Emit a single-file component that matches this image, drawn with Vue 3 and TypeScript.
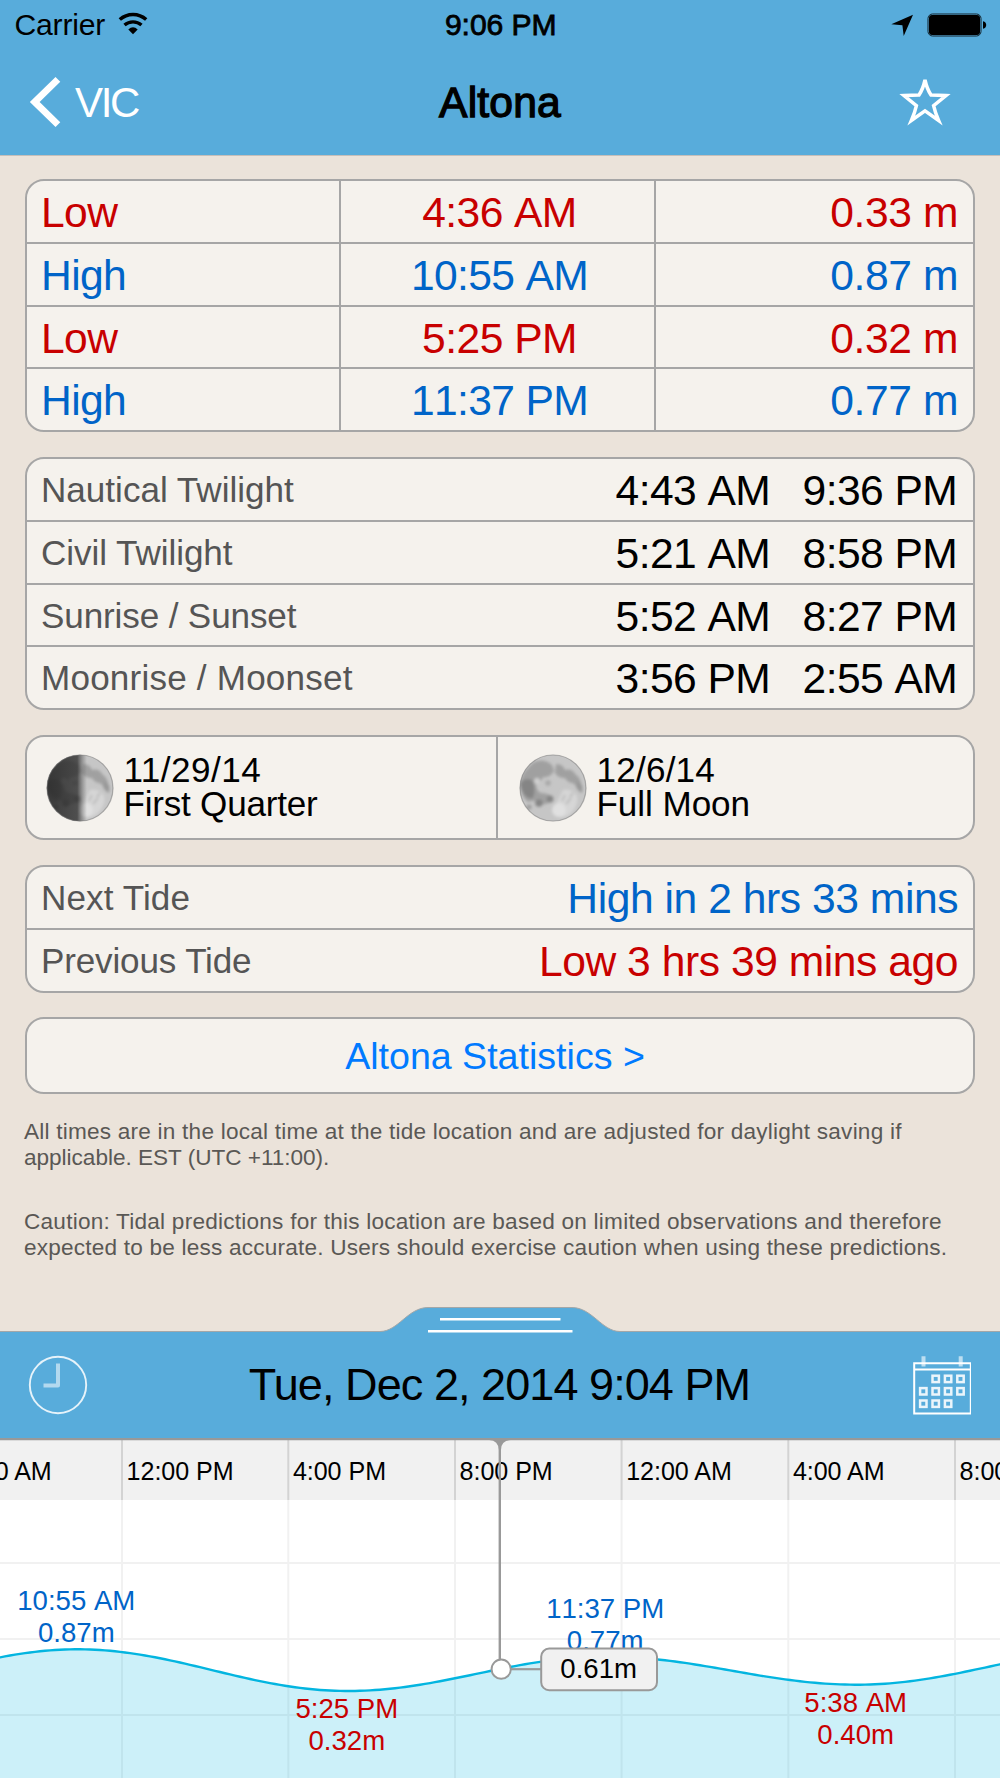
<script setup lang="ts">
interface Tide { kind: 'Low' | 'High'; time: string; height: string; spacing: number }
interface SunRow { label: string; start: string; end: string; labelSpacing: number }
interface Extreme { x: number; y: number }
interface ChartLabel { x: number; y: number; time: string; height: string; kind: 'low' | 'high' }

const tides: Tide[] = [
  { kind: 'Low', time: '4:36 AM', height: '0.33 m', spacing: -0.6 },
  { kind: 'High', time: '10:55 AM', height: '0.87 m', spacing: -0.65 },
  { kind: 'Low', time: '5:25 PM', height: '0.32 m', spacing: -0.5 },
  { kind: 'High', time: '11:37 PM', height: '0.77 m', spacing: -0.65 },
]

const sunRows: SunRow[] = [
  { label: 'Nautical Twilight', start: '4:43 AM', end: '9:36 PM', labelSpacing: 0 },
  { label: 'Civil Twilight', start: '5:21 AM', end: '8:58 PM', labelSpacing: -0.06 },
  { label: 'Sunrise / Sunset', start: '5:52 AM', end: '8:27 PM', labelSpacing: -0.13 },
  { label: 'Moonrise / Moonset', start: '3:56 PM', end: '2:55 AM', labelSpacing: 0.2 },
]

const phases = [
  { date: '11/29/14', name: 'First Quarter', dark: true, spacing: 0.47, nameSpacing: -0.22 },
  { date: '12/6/14', name: 'Full Moon', dark: false, spacing: 0.22, nameSpacing: -0.06 },
]

const notes = [
  [
    { text: 'All times are in the local time at the tide location and are adjusted for daylight saving if', spacing: 0.216 },
    { text: 'applicable. EST (UTC +11:00).', spacing: -0.03 },
  ],
  [
    { text: 'Caution: Tidal predictions for this location are based on limited observations and therefore', spacing: 0.228 },
    { text: 'expected to be less accurate. Users should exercise caution when using these predictions.', spacing: 0.2 },
  ],
]

// Chart space: y is measured from the bottom edge of the date bar.
const columns = [
  { x: -44.6, label: '8:00 AM' },
  { x: 122, label: '12:00 PM' },
  { x: 288.3, label: '4:00 PM' },
  { x: 455, label: '8:00 PM' },
  { x: 621.6, label: '12:00 AM' },
  { x: 788.3, label: '4:00 AM' },
  { x: 955, label: '8:00 AM' },
]
const gridRows = [125, 201, 277]

const extremes: Extreme[] = [
  { x: -186, y: 252.3 },
  { x: 77, y: 211.3 },
  { x: 347.5, y: 253 },
  { x: 606, y: 218.6 },
  { x: 857, y: 246.7 },
  { x: 1125, y: 209.8 },
]

function tideAt(x: number): number {
  let i = 0
  while (i < extremes.length - 2 && x > extremes[i + 1].x) i++
  const a = extremes[i]
  const b = extremes[i + 1]
  const t = (x - a.x) / (b.x - a.x)
  return a.y + ((b.y - a.y) * (1 - Math.cos(Math.PI * t))) / 2
}

const samples: string[] = []
for (let x = -5; x <= 1005; x += 5) samples.push(`${x} ${tideAt(x).toFixed(2)}`)
const curve = 'M' + samples.join('L')
const water = curve + 'V341H-5Z'

const chartLabels: ChartLabel[] = [
  { x: 76.3, y: 171.8, time: '10:55 AM', height: '0.87m', kind: 'high' },
  { x: 346.8, y: 279.6, time: '5:25 PM', height: '0.32m', kind: 'low' },
  { x: 605.2, y: 179.6, time: '11:37 PM', height: '0.77m', kind: 'high' },
  { x: 855.7, y: 273.8, time: '5:38 AM', height: '0.40m', kind: 'low' },
]

const days = [
  [1, 0], [2, 0], [3, 0],
  [0, 1], [1, 1], [2, 1], [3, 1],
  [0, 2], [1, 2], [2, 2],
]
</script>

<template>
  <div class="screen">
    <header class="top">
      <div class="status">
        <div class="side">
          <span class="carrier">Carrier</span>
          <svg class="wifi" width="32" height="24" viewBox="0 0 32 24">
            <path d="M2.8 7.6A19.6 19.6 0 0 1 29.2 7.6" fill="none" stroke="#000" stroke-width="3.4" />
            <path d="M7.5 13.1A13 13 0 0 1 24.5 13.1" fill="none" stroke="#000" stroke-width="3.3" />
            <path d="M11.3 17.4Q16 12.9 20.7 17.4L16 22.2Z" />
          </svg>
        </div>
        <span class="clock">9:06 PM</span>
        <div class="side end">
          <svg width="24" height="24" viewBox="0 0 24 24"><path d="M23 1.7L1.3 11.2 12.4 12.2 13.7 23Z" /></svg>
          <svg class="battery" width="60" height="24" viewBox="0 0 60 24">
            <rect x="1" y="1" width="53" height="22" rx="4.5" fill="none" stroke="#12232c" stroke-width="1" />
            <rect x="2" y="2" width="51" height="20" rx="3" />
            <path d="M56 8.2Q59.2 9 59.2 12T56 15.8Z" />
          </svg>
        </div>
      </div>
      <div class="nav">
        <div class="side">
          <svg width="34" height="54" viewBox="0 0 34 54">
            <path d="M29.9 4.4L6.7 27 29.9 49.6" fill="none" stroke="#fff" stroke-width="6.8" />
          </svg>
          <span class="back-label">VIC</span>
        </div>
        <h1 class="title">Altona</h1>
        <div class="side end">
          <svg class="star" width="56" height="56" viewBox="0 0 56 56">
            <path d="M28 9Q30 18 34 24Q41 24.2 49 24.6L36.6 34.6Q38 41 41.6 49.4L28 39.8 14.4 49.4Q18 41 19.4 34.6L7 24.6Q15 24.2 22 24Q26 18 28 9Z" fill="none" stroke="#fff" stroke-width="3.5" stroke-miterlimit="4.5" />
          </svg>
        </div>
      </div>
    </header>

    <main class="content">
      <section class="card table">
        <div v-for="tide in tides" :key="tide.time" class="row" :class="tide.kind.toLowerCase()">
          <span class="kind">{{ tide.kind }}</span>
          <span class="time" :style="{ letterSpacing: tide.spacing + 'px' }">{{ tide.time }}</span>
          <span class="height">{{ tide.height }}</span>
        </div>
      </section>

      <section class="card table">
        <div v-for="row in sunRows" :key="row.label" class="row pair">
          <span class="label" :style="{ letterSpacing: row.labelSpacing + 'px' }">{{ row.label }}</span>
          <span class="times"><span>{{ row.start }}</span><span>{{ row.end }}</span></span>
        </div>
      </section>

      <section class="card moons">
        <div v-for="phase in phases" :key="phase.date" class="phase">
          <svg class="moon" width="70" height="70" viewBox="-35 -35 70 70">
            <defs>
              <clipPath :id="'disc-' + phase.dark"><circle r="33.2" /></clipPath>
              <filter :id="'soft-' + phase.dark" x="-20%" y="-20%" width="140%" height="140%"><feGaussianBlur stdDeviation="1.6" /></filter>
              <linearGradient :id="'shade-' + phase.dark">
                <stop offset="0" stop-color="#262626" stop-opacity=".88" />
                <stop offset=".46" stop-color="#2d2d2d" stop-opacity=".78" />
                <stop offset=".6" stop-color="#555" stop-opacity="0" />
              </linearGradient>
            </defs>
            <g :clip-path="`url(#disc-${phase.dark})`">
              <circle r="34" fill="#c6c6c6" />
              <g :filter="`url(#soft-${phase.dark})`">
                <path d="M-33 -6Q-30 -16 -24 -21Q-18 -29 -8 -27Q0 -25 1 -17Q-3 -10 -10 -11Q-12 -5 -17 -5Q-17 3 -12 5Q-6 5 -2 8Q1 13 -5 15Q-9 18 -14 14Q-20 12 -25 14Q-33 8 -33 -6Z" fill="#a0a0a0" />
                <path d="M-33 -4Q-27 -12 -20 -7Q-17 2 -20 10Q-29 12 -33 -4Z" fill="#858585" />
                <path d="M3 -24Q10 -24 12 -18Q19 -20 22 -14Q28 -10 28 -3Q23 0 20 -5Q15 -5 12 -10Q5 -10 2 -15Z" fill="#a0a0a0" />
                <path d="M25 -7Q31 -4 29 5Q25 3 23 -1Z" fill="#989898" />
                <circle cx="-14" cy="15" r="3.8" fill="#858585" />
                <circle cx="-3" cy="11" r="3.4" fill="#858585" />
                <circle cx="-24" cy="19" r="2.6" fill="#9c9c9c" />
                <circle cx="-16" cy="-7" r="3" fill="#d0d0d0" />
                <circle cx="-5" cy="-5" r="2.8" fill="#a8a8a8" />
                <path d="M0 22L10 2Q18 0 24 8Q26 20 14 28Q4 32 0 22Z" fill="#d6d6d6" />
                <circle cx="6" cy="22" r="7" fill="#e0e0e0" />
                <path d="M9 13L12 7M13 16L18 10M17 9L20 5" stroke="#b2b2b2" stroke-width="1.4" />
              </g>
              <rect v-if="phase.dark" x="-35" y="-35" width="70" height="70" :fill="`url(#shade-${phase.dark})`" />
            </g>
            <circle r="33" fill="none" stroke="#777" stroke-opacity=".5" stroke-width="1.2" />
          </svg>
          <div class="phase-text">
            <div :style="{ letterSpacing: phase.spacing + 'px' }">{{ phase.date }}</div>
            <div :style="{ letterSpacing: phase.nameSpacing + 'px' }">{{ phase.name }}</div>
          </div>
        </div>
      </section>

      <section class="card next">
        <div class="row pair">
          <span class="label wide">Next Tide</span><span class="high until">High in 2 hrs 33 mins</span>
        </div>
        <div class="row pair">
          <span class="label">Previous Tide</span><span class="low until">Low 3 hrs 39 mins ago</span>
        </div>
      </section>

      <a class="card stats">Altona Statistics &gt;</a>

      <p v-for="(note, n) in notes" :key="n" class="note">
        <span v-for="line in note" :key="line.text" class="line" :style="{ letterSpacing: line.spacing + 'px' }">{{ line.text }}</span>
      </p>
    </main>

    <section class="datebar">
      <svg class="tab" width="250" height="28" viewBox="375 0 250 28">
        <path d="M375 28V25.5H380C398 25.5 408 1.5 428 1.5H572C592 1.5 602 25.5 620 25.5H625V28Z" fill="#58acdb" />
        <path d="M375 25.5H380C398 25.5 408 1.5 428 1.5H572C592 1.5 602 25.5 620 25.5H625" fill="none" stroke="#a3a7a8" stroke-width="1" />
        <path d="M440 13.2H560.5M428 25.2H572.5" stroke="#fff" stroke-width="2.4" />
      </svg>
      <svg class="tool" width="60" height="60" viewBox="-30 -30 60 60">
        <circle r="28.2" fill="none" stroke="#fff" stroke-opacity=".85" stroke-width="1.9" />
        <path d="M0 -21.5V0.5H-14.5" fill="none" stroke="#fff" stroke-opacity=".55" stroke-width="4" stroke-linejoin="round" />
      </svg>
      <span class="date">Tue, Dec 2, 2014 9:04 PM</span>
      <svg class="tool" width="60" height="60" viewBox="0 0 60 60">
        <path d="M3.2 8.2H59.8V58.4H3.2ZM3.2 14.6H59.8" fill="none" stroke="#fff" stroke-width="2" />
        <path d="M12.5 1.2V11.5M49.7 1.2V11.5" stroke="#fff" stroke-opacity=".6" stroke-width="4" />
        <rect v-for="[c, r] in days" :key="`${c}-${r}`" :x="9.1 + c * 12.4" :y="20.7 + r * 12.4" width="6.4" height="6.4" fill="none" stroke="#fff" stroke-opacity=".88" stroke-width="2.5" />
      </svg>
    </section>

    <svg class="chart" width="1000" height="340" viewBox="0 0 1000 340">
      <rect width="1000" height="341" fill="#fff" />
      <rect y="0" width="1000" height="62" fill="#f1f1f1" />
      <path v-for="y in gridRows" :key="y" :d="`M0 ${y}H1000`" stroke="#f1f1f1" stroke-width="2" />
      <g v-for="col in columns" :key="col.x">
        <path :d="`M${col.x} 62V341`" stroke="#f1f1f1" stroke-width="2" />
        <path :d="`M${col.x} 0V62`" stroke="#d3d3d3" stroke-width="2" />
        <text class="hour" :x="col.x + 4.6" y="41.6">{{ col.label }}</text>
      </g>
      <path :d="water" fill="#00b4e0" fill-opacity=".2" />
      <path :d="curve" fill="none" stroke="#03b5e0" stroke-width="2.4" />
      <g v-for="label in chartLabels" :key="label.x" class="mark" :class="label.kind">
        <text :x="label.x" :y="label.y">{{ label.time }}</text>
        <text :x="label.x" :y="label.y + 32">{{ label.height }}</text>
      </g>
      <path d="M0 0H1000V2.2H511Q501 2.2 501 12V222H498.6V12Q498.6 2.2 489 2.2H0Z" fill="#999" />
      <path d="M511 231.2H541" stroke="#999" stroke-width="2.2" />
      <circle cx="501.2" cy="231.2" r="9.6" fill="#fff" stroke="#999" stroke-width="2" />
      <rect x="541.2" y="210.6" width="115.8" height="41.6" rx="8" fill="#f1f1f1" stroke="#999" stroke-width="2" />
      <text class="reading" x="598.7" y="240.4">0.61m</text>
    </svg>
  </div>
</template>

<style>
body { margin: 0; }
</style>

<style scoped>
.screen {
  width: 1000px;
  height: 1778px;
  overflow: hidden;
  display: flex;
  flex-direction: column;
  background: #ebe3da;
  color: #000;
  font-family: "Liberation Sans", Arial, sans-serif;
  font-size: 42.6px;
  letter-spacing: -0.4px;
  white-space: nowrap;
}
svg { display: block; flex: none; }

.top { flex: none; height: 155px; background: #58acdb; border-bottom: 1px solid #c5bfba; }
.status { display: flex; align-items: center; height: 50px; padding: 0 13px 0 14.5px; box-sizing: border-box; font-size: 30.1px; letter-spacing: -0.2px; line-height: 52px; }
.side { display: flex; align-items: center; flex: 1 1 0; }
.end { justify-content: flex-end; }
.wifi { margin: -2px 0 0 11.5px; }
.clock { -webkit-text-stroke: 0.8px #000; letter-spacing: -0.05px; }
.battery { margin-left: 13px; }
.nav { display: flex; align-items: center; height: 103px; padding: 0 47px 0 28px; line-height: 52px; }
.nav .end { margin-top: -5px; }
.back-label { margin: 2px 0 0 13px; color: #fff; letter-spacing: -2.3px; font-size: 42px; }
.title { margin: 0 0 0 19px; font-size: 42.6px; font-weight: 400; -webkit-text-stroke: 1.3px #000; letter-spacing: 0.2px; }

.content { flex: none; height: 1175px; padding: 23px 25px 0; box-sizing: border-box; display: flex; flex-direction: column; }
.card { flex: none; box-sizing: border-box; background: #f5f2ed; border: 2px solid #a6a6a6; border-radius: 19px; margin-bottom: 25px; overflow: hidden; }
.table { height: 253px; }
.row { display: flex; box-sizing: border-box; height: 62.75px; border-bottom: 2px solid #a6a6a6; line-height: 63px; }
.row:last-child { border-bottom: 0; height: 60.75px; }
.low { color: #c80000; fill: #c80000; }
.high { color: #0064c8; fill: #0064c8; }
.kind, .time, .height { box-sizing: border-box; }
.kind { width: 312px; padding-left: 14px; letter-spacing: -0.6px; }
.time { width: 317px; border: solid #a6a6a6; border-width: 0 2px; text-align: center; padding-left: 4px; font-kerning: none; }
.height { flex: 1; text-align: right; padding-right: 15px; }
.pair { justify-content: space-between; padding: 0 15px 0 14px; }
.label { font-size: 35.1px; color: #555; letter-spacing: -0.16px; line-height: 61px; }
.wide { letter-spacing: 0.1px; }
.until { letter-spacing: -0.45px; }
.times { display: flex; gap: 31.5px; font-kerning: none; letter-spacing: -0.55px; }
.times span { width: 155.5px; }

.moons { height: 105px; display: flex; }
.phase { display: flex; align-items: center; flex: 1; padding-left: 18px; }
.phase:first-child { flex: none; width: 471px; box-sizing: border-box; border-right: 2px solid #a6a6a6; }
.phase + .phase { padding-left: 20px; }
.phase-text { margin-left: 8.5px; padding-bottom: 2px; font-size: 35.1px; line-height: 34px; }

.next { height: 128px; margin-bottom: 24px; }
.stats { height: 77px; margin-bottom: 25px; padding-right: 10px; text-align: center; line-height: 75px; font-size: 37.6px; letter-spacing: 0; color: #007aff; }
.note { margin: 0 0 37.5px -1px; font-size: 22.6px; line-height: 26px; color: #5a5855; }
.line { display: block; }

.datebar { position: relative; flex: none; height: 107px; box-sizing: border-box; border-top: 1px solid #a3a7a8; background: #58acdb; padding: 0 29px 0 28px; display: flex; align-items: center; justify-content: space-between; }
.tab { position: absolute; left: 375px; top: -26px; }
.tool { margin-top: -1px; }
.date { font-size: 45px; letter-spacing: -0.93px; margin-top: -1px; }

.chart { font-family: "Liberation Sans", Arial, sans-serif; }
.hour { font-size: 25.1px; letter-spacing: -0.05px; }
.mark, .reading { font-size: 27.6px; letter-spacing: 0; text-anchor: middle; font-kerning: none; }
</style>
